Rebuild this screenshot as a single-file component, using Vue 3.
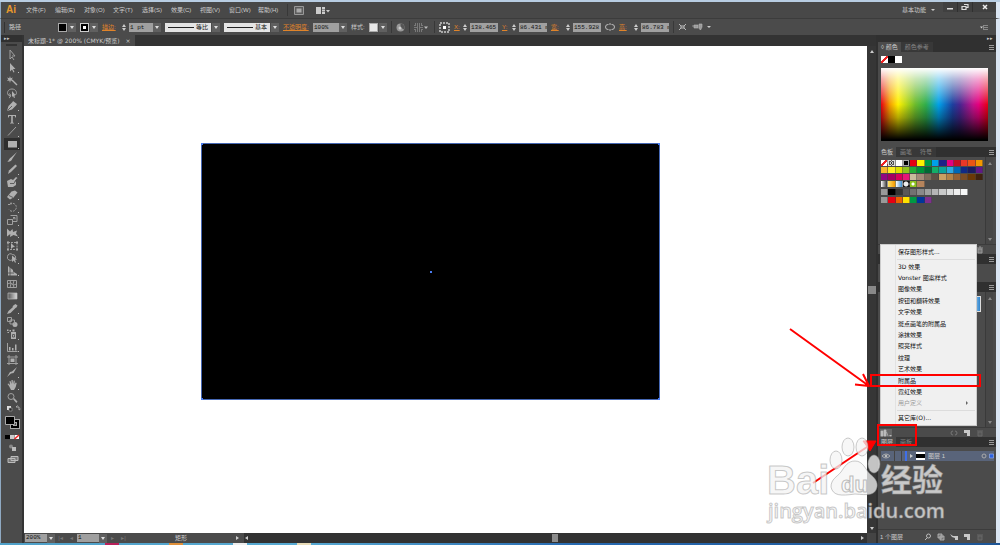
<script setup>
const menus = ['文件(F)', '编辑(E)', '对象(O)', '文字(T)', '选择(S)', '效果(C)', '视图(V)', '窗口(W)', '帮助(H)']

const tools = [
  { name: '选择工具', s: 'M4 1v9l2-2 2 3M4 1l5 6H6' },
  { name: '直接选择工具', f: 'M4 1l5.500 6H7l1.500 3-1 .6L6 7.500 4 9.500z', more: true },
  { name: '魔棒工具', f: 'M5.500 5.500l1-1 5 5-1 1z M4 1l.7 2.300L7 2.500 5.700 4.300 7 6 4.700 5.500 4 8 3.300 5.500 1 6l1.300-1.800L1 2.500l2.300.8z' },
  { name: '套索工具', s: 'M4 9C0 8 1 2 6 2s6 6 2 6.500M4 9c-2-1-1-3 0-2s1 3-1 4', f: 'M6 4l3.500 4H8l1 2.500-1 .5-1-2-1 1z' },
  { name: '钢笔工具', f: 'M7 1l4 3-1 1.500-4 4L1 11l1.500-5L6.500 2z', cut: 'M1.500 10.500L6 6', more: true },
  { name: '文字工具', f: 'M2 2h8v2.500H9.300L8.800 3H6.800v6.500l1.200.5v.5H4V10l1.200-.5V3h-2l-.5 1.500H2z', more: true },
  { name: '直线段工具', s: 'M2 10.500L10 2', more: true },
  { name: '矩形工具', f: 'M2 3h9v6.500H2z', more: true, on: true },
  { name: '画笔工具', f: 'M11 1L6.500 7.500C5.500 10.500 3 11 1 10.500c2-.5 1.500-2.500 4-4z' },
  { name: '铅笔工具', f: 'M9.500 1.500l1.500 1.500-6 6L2 11l1-3.500z', more: true },
  { name: '斑点画笔工具', f: 'M1 5l4-2 2 1 3-3 1.500 1L8 6l2-1v4l-3 2H2z', cut: 'M4 7.500h4l3-5' },
  { name: '橡皮擦工具', f: 'M5.500 2.500L9 1.500l2.500 2-4 5L4 10.500 1 8z', cut: 'M3 6.500l4 2', more: true },
  { name: '旋转工具', s: 'M4 3a4 4 0 1 1-1 5.500M2 3.500h3v-2', dash: true, more: true },
  { name: '比例缩放工具', s: 'M1.500 5.500h5v5h-5zM4.500 1.500h6.500v6H7M6.500 5.500L9 3.500M7 3.500h2v2', more: true },
  { name: '宽度工具', f: 'M1 1.500l3 3 2.500-2.500L7 5l4-1.500-1 3 2 3-4.500-1.500L4 10l.3-3L1 9.500z', more: true },
  { name: '自由变换工具', s: 'M2 2.500h9v7H2z', f: 'M1 1.500h2v2H1zM10 1.500h2v2h-2zM1 8.500h2v2H1zM10 8.500h2v2h-2zM5 3l4 4-2 .2L5 9z', dash: true },
  { name: '形状生成器工具', s: 'M1.500 4.500a3 3 0 0 1 5-2 3 3 0 0 1 3 4M1.500 4.500a3 3 0 0 0 5 3', f: 'M6 3.500l5 4-2 .3 1 2.500-1 .5-1.200-2.300L6 10z', more: true },
  { name: '透视网格工具', f: 'M2 1l5 4v1.500l4 2.500v1.500H2z', cut: 'M4 2v9M2 8h6', more: true },
  { name: '网格工具', s: 'M1.500 2.500h9v7h-9zM1.500 6q3-2 4.500 0t4.500 0M4 2.500q2 3 0 7M8 2.500q-2 4 0 7' },
  { name: '渐变工具', grad: true },
  { name: '吸管工具', f: 'M8 2l1.500-1 2 1.500-1 2-1 .5-5 5L1 11l1.500-3 4.500-4-.5-.8z', more: true },
  { name: '混合工具', s: 'M1.500 1.500h4v4h-4zM4 4h4.500v4H4z', f: 'M9 6a2.500 2.500 0 1 1 0 5 2.500 2.500 0 0 1 0-5z' },
  { name: '符号喷枪工具', f: 'M5 4h5v7H5zM6.500 1.500h2V3.500h-2zM1 1.500h1.500V3H1zM3.500 2H5v1.500H3.500zM1.500 4H3v1H1.500z', cut: 'M6.500 6.500h2v2.500h-2z', more: true },
  { name: '柱形图工具', s: 'M1.500 2v8.500H11.500', f: 'M3 6h1.500v3.500H3zM6 7h1.500v2.500H6zM9 3.500h1.500v6H9z', more: true },
  { name: '画板工具', s: 'M3 1v10M10 1v10M1 3h11M1 9.500h11', f: 'M4.500 4.500h4v3.500h-4z' },
  { name: '切片工具', f: 'M11 1l-3.500 6L5 7.500 1 11l3-5 2-.5z', more: true },
  { name: '抓手工具', f: 'M3 7L1.500 5l1-.5L4 6 3.500 2h1L5.500 5V1h1.200l.3 4 .8-3.500 1 .2L8.500 5.500l1.200-2 1 .5-1 4L8 11H5z', more: true },
  { name: '缩放工具', s: 'M5 1.500a3 3 0 1 1 0 6 3 3 0 0 1 0-6', f: 'M7 7l1-1 3.500 3.500-1.200 1.500z' },
]

const swatches = [
  'none', 'reg', '#fff', 'key', '#e60012', '#fff100', '#009944', '#00a0e9', '#1d2088', '#e4007f', '#c30d23', '#e83828', '#ea5514', '#f39800',
  '#f8b62d', '#fcee21', '#dbe000', '#8fc31f', '#22ac38', '#009139', '#006934', '#13ae67', '#0ba29a', '#2ea7e0', '#0068b7', '#102a85', '#1b1c60', '#601986',
  '#920783', '#a40061', '#d7005a', '#e61678', '#c9bc9c', '#a38b78', '#7d6b5a', '#5d5044', '#c9a063', '#b28247', '#956134', '#7b4d24', '#6a3906', '#40220f',
  'g-silver', 'g-gold', 'g-sky', 'dot', 'leaf', 'cloth',
]
const grays = ['#000', '#333', '#595757', '#727171', '#898989', '#9fa0a0', '#b5b5b6', '#c9caca', '#dcdddd', '#efefef', '#f7f8f8']
const brights = ['#e60012', '#eb6100', '#ffe100', '#009944', '#00369b', '#7f2f8e']

const effects = ['3D 效果', 'Vonster 图案样式', '图像效果', '按钮和翻转效果', '文字效果', '斑点画笔的附属品', '涂抹效果', '照亮样式', '纹理', '艺术效果', '附属品', '霓虹效果', '用户定义']
</script>

<template>
  <div class="app">
    <header class="menubar">
      <strong class="brand">Ai</strong>
      <nav class="menus">
        <button v-for="m in menus" :key="m">{{ m }}</button>
      </nav>
      <i class="sep"></i>
      <button class="bridge" aria-label="Bridge"><svg width="10" height="9" viewBox="0 0 10 9"><path d="M.5.500h9v8h-9z" fill="#5c5c5c" stroke="#999" /><path d="M2.500 2.500h5v4h-5z" fill="#aaa" /></svg></button>
      <button aria-label="排列文档"><svg width="14" height="9" viewBox="0 0 14 9"><path d="M0 1h5v7H0zM6 1h3v2H6zM6 3.500h3v2H6zM6 6h3v2H6zM10 4h4l-2 2.500z" fill="#ccc" /></svg></button>
      <button class="workspace">基本功能 <i class="caret"></i></button>
      <div class="winbtns">
        <button aria-label="最小化"><svg width="10" height="8" viewBox="0 0 10 8"><path d="M2 5h6v1.500H2z" fill="#ddd" /></svg></button>
        <button aria-label="还原"><svg width="10" height="8" viewBox="0 0 10 8"><path d="M4 1.500h4v3H6M2 3.500h4v3H2z" fill="none" stroke="#ddd" stroke-width="1.200" /></svg></button>
        <button class="close" aria-label="关闭"><svg width="10" height="8" viewBox="0 0 10 8"><path d="M3 2l4 4M7 2L3 6" stroke="#eee" stroke-width="1.500" /></svg></button>
      </div>
    </header>

    <div class="control">
      <i class="grip"></i>
      <span class="kind">路径</span>
      <div class="combo"><button class="chip black" aria-label="填色"></button><button class="dd" aria-label="填色选项"></button></div>
      <div class="combo"><button class="chip ring" aria-label="描边颜色"></button><button class="dd" aria-label="描边选项"></button></div>
      <label class="hot w15" for="stroke">描边:</label>
      <div class="field"><i class="step"></i><input id="stroke" class="w24" value="1 pt"><button class="dd" aria-label="粗细"></button></div>
      <div class="profile"><div class="pick"><select aria-label="变量宽度配置文件"><option>等比</option></select></div><button class="dd" aria-label="配置"></button></div>
      <div class="profile"><div class="pick"><select aria-label="画笔定义"><option>基本</option></select></div><button class="dd" aria-label="画笔"></button></div>
      <label class="hot w26" for="opacity">不透明度:</label>
      <div class="field"><input id="opacity" class="w26" value="100%"><button class="dd" aria-label="不透明度选项"></button></div>
      <span class="w14">样式:</span>
      <div class="combo"><button class="chip white" aria-label="图形样式"></button><button class="dd" aria-label="样式选项"></button></div>
      <i class="sep"></i>
      <svg width="9" height="9" viewBox="0 0 9 9"><circle cx="4.500" cy="4.500" r="4" fill="#999" /><path d="M4.500 4.500V.5a4 4 0 0 1 3.500 6z" fill="#555" /><circle cx="4" cy="5" r="1.500" fill="#ccc" /></svg>
      <i class="sep"></i>
      <svg width="16" height="9" viewBox="0 0 16 9"><path d="M1 1h7v7H1zM3 3h3v3H3z" fill="none" stroke="#aaa" stroke-dasharray="1 1" /><path d="M10 3.500h4l-2 2.500z" fill="#bbb" /></svg>
      <i class="sep"></i>
      <svg width="11" height="11" viewBox="0 0 11 11"><path d="M1 1h9v9H1z" fill="none" stroke="#aaa" stroke-width="2" stroke-dasharray="2 1" /><path d="M4 4h3v3H4z" fill="#fff" /></svg>
      <label class="hot w4" for="x">X:</label>
      <div class="field"><i class="step"></i><input id="x" class="w28" value="138.465 mm"></div>
      <label class="hot w5" for="y">Y:</label>
      <div class="field"><i class="step"></i><input id="y" class="w28" value="86.431 mm"></div>
      <label class="hot w10" for="w">宽:</label>
      <div class="field"><i class="step"></i><input id="w" class="w28" value="155.928 mm"></div>
      <svg width="10" height="8" viewBox="0 0 10 8"><path d="M3.500 1.500H3a2.500 2.500 0 0 0 0 5h.5M6.500 1.500H7a2.500 2.500 0 0 1 0 5h-.5M5 0v2M5 6v2" fill="none" stroke="#bbb" /></svg>
      <label class="hot w10" for="h">高:</label>
      <div class="field"><i class="step"></i><input id="h" class="w28" value="86.783 mm"></div>
      <i class="sep"></i>
      <svg width="9" height="8" viewBox="0 0 9 8"><path d="M1 1l2 2M8 1L6 3M1 7l2-2M8 7L6 5M3 3h3v2H3z" fill="none" stroke="#bbb" /></svg>
      <svg width="12" height="8" viewBox="0 0 12 8"><path d="M3 2h4v3H3zM8 1h3v3L9.500 7 8 5.500zM3 3H1" fill="#999" stroke="#bbb" stroke-width=".6" /></svg>
      <i class="caret"></i>
      <button class="flyout" aria-label="控制面板菜单"><svg width="8" height="7" viewBox="0 0 8 7"><path d="M0 2.500h3L1.500 4.500z" fill="#ccc" /><path d="M4 1.500h4M4 3.500h4M4 5.500h4M3.500 1v5" stroke="#999" stroke-width=".8" /></svg></button>
    </div>

    <div class="work">
      <aside class="toolbox">
        <div class="tophead">▸▸</div>
        <div class="dots"></div>
        <div class="tools">
          <button v-for="t in tools" :key="t.name" :class="{ on: t.on, more: t.more }" :aria-label="t.name">
            <svg width="12" height="12" viewBox="0 0 12 12">
              <defs v-if="t.grad"><linearGradient id="toolGrad"><stop stop-color="#555" /><stop offset="1" stop-color="#ddd" /></linearGradient></defs>
              <path v-if="t.grad" d="M2 3h9v6H2z" fill="url(#toolGrad)" stroke="#bbb" stroke-width=".7" />
              <path v-if="t.f" :d="t.f" fill="#b0b0b0" />
              <path v-if="t.s" :d="t.s" fill="none" stroke="#a0a0a0" :stroke-dasharray="t.dash ? '2 1' : null" />
              <path v-if="t.cut" :d="t.cut" fill="none" stroke="#4a4a4a" stroke-width=".8" />
            </svg>
          </button>
        </div>
        <svg class="paint" width="18" height="60" viewBox="0 0 18 60">
          <path d="M3 2h4v4H3z" fill="#ddd" /><path d="M5 4h3v3H5z" fill="#222" stroke="#aaa" stroke-width=".6" />
          <path d="M12 3h3v3M12 3l1.500-1.500M15 6l1.500-1" fill="none" stroke="#aaa" />
          <path d="M8 17h6v6H8z" fill="none" stroke="#aaa" stroke-width="4" /><path d="M8 17h6v6H8z" fill="none" stroke="#000" stroke-width="2" />
          <path d="M1.500 12.500h9v8h-9z" fill="#000" stroke="#aaa" />
          <path d="M1 31h5v4H1z" /><path d="M6 31h4v4H6z" fill="#ccc" /><path d="M10.500 31H15v4h-4.500z" fill="#fff" /><path d="M10.500 35L15 31" stroke="#e22" stroke-width="1.500" />
          <circle cx="7" cy="42.500" r="2" fill="#888" /><path d="M8 43h4v4H8z" fill="#bbb" />
          <path d="M7 52.500h7v4H7zM4 54.500h7v4H4z" fill="#777" stroke="#bbb" />
        </svg>
      </aside>

      <main class="document">
        <div class="tabs"><div class="tab">未标题-1* @ 200% (CMYK/预览)<button aria-label="关闭文档">×</button></div></div>
        <div class="view">
          <section class="canvas"><div class="art"><i></i><i></i><i></i><i></i><b></b></div></section>
          <div class="vbar"><i class="tri up"></i><i class="thumb"></i><i class="tri down"></i></div>
        </div>
        <footer class="status">
          <input class="zoom" aria-label="缩放" value="200%"><button class="dd" aria-label="缩放级别"></button>
          <span class="nav">|◂</span><span class="nav">◂</span>
          <input class="zoom" aria-label="画板" value="1"><button class="dd" aria-label="画板导航"></button>
          <span class="nav">▸</span><span class="nav">▸|</span>
          <span class="mode">矩形</span>
          <i class="tri right"></i>
          <div class="hbar"><i class="tri left"></i><i class="thumb"></i><i class="tri right"></i></div>
          <i class="corner"></i>
        </footer>
      </main>

      <aside class="dock">
        <div class="tophead end">▸▸</div>
        <section class="panel color">
          <div class="phead"><button class="ptab on">◊ 颜色</button><button class="ptab">颜色参考</button><i class="pmenu"></i></div>
          <div class="pbody">
            <div class="tiny"><i class="none"></i><i class="k"></i><i class="w"></i></div>
            <div class="spectrum"></div>
          </div>
        </section>
        <section class="panel swatch">
          <div class="phead"><button class="ptab on">色板</button><button class="ptab">画笔</button><button class="ptab">符号</button><i class="pmenu"></i></div>
          <div class="pbody row">
            <div class="swatchlist">
              <div class="grid"><i v-for="(c, n) in swatches" :key="n" :class="c[0] === '#' ? '' : c" :style="{ backgroundColor: c[0] === '#' ? c : null }"></i></div>
              <div class="grid group"><i class="folder"></i><i v-for="c in grays" :key="c" :style="{ backgroundColor: c }"></i></div>
              <div class="grid group"><i class="folder"></i><i v-for="c in brights" :key="c" :style="{ backgroundColor: c }"></i></div>
            </div>
            <div class="pscroll"><i class="tri up"></i><i class="tri down"></i></div>
          </div>
          <div class="pfoot"><svg width="8" height="8" viewBox="0 0 8 8"><path d="M1 2h6M3 1h2M2 3h4v4H2z" fill="#777" stroke="#999" /></svg></div>
        </section>
        <section class="panel strokep">
          <div class="phead"><i class="pmenu"></i></div>
          <div class="pbody"></div>
        </section>
        <section class="panel styles">
          <div class="phead"><i class="pmenu"></i></div>
          <div class="pbody row">
            <div class="stylelist"><i class="sky"></i></div>
            <div class="pscroll"><i class="tri up"></i><i class="tri down"></i></div>
          </div>
          <div class="pfoot">
            <button class="lib" aria-label="图形样式库菜单"><svg width="12" height="8" viewBox="0 0 12 8"><path d="M1 2h2v5H1zM4 1h2v6H4zM6.500 3L8 7" fill="#bbb" stroke="#bbb" stroke-width=".7" /><path d="M9 6h3l-1.500 1.500z" fill="#bbb" /></svg></button>
            <svg class="push" width="8" height="8" viewBox="0 0 8 8"><path d="M3 2a2 2 0 0 0 0 4M5 2a2 2 0 0 1 0 4" fill="none" stroke="#777" /></svg>
            <svg width="8" height="8" viewBox="0 0 8 8"><path d="M1 1h6v6H4V4H1z" fill="#c8c8c8" /></svg>
            <svg width="8" height="8" viewBox="0 0 8 8"><path d="M1 2h6M2 3h4v4H2z" fill="#555" stroke="#686868" /></svg>
          </div>
        </section>
        <section class="panel layers">
          <div class="phead"><button class="ptab on">图层</button><button class="ptab">画板</button><i class="pmenu"></i></div>
          <div class="pbody">
            <div class="layer">
              <svg width="10" height="8" viewBox="0 0 10 8"><path d="M1 4q4-4 8 0-4 4-8 0z" fill="none" stroke="#aaa" /><circle cx="5" cy="4" r="1.300" fill="#bbb" /></svg>
              <i class="cell"></i><i class="bar"></i><i class="tri right"></i><i class="pic"></i><span>图层 1</span>
              <svg class="target" width="13" height="8" viewBox="0 0 13 8"><circle cx="3" cy="4" r="2" fill="none" stroke="#aaa" /><path d="M8.500 2h4v4h-4z" fill="#2d62e0" stroke="#9bb4ee" stroke-width=".6" /></svg>
            </div>
          </div>
          <div class="pfoot">
            <span>1 个图层</span>
            <svg class="push" width="8" height="8" viewBox="0 0 8 8"><circle cx="4.500" cy="3" r="2" fill="none" stroke="#bbb" /><path d="M3 5L1 7" stroke="#bbb" /></svg>
            <svg width="8" height="8" viewBox="0 0 8 8"><path d="M1 1h4v4H1zM3 3h4v4H3z" fill="#777" stroke="#bbb" stroke-width=".8" /></svg>
            <svg width="8" height="8" viewBox="0 0 8 8"><path d="M0 1l3 2h5v4H5V5L2 4z" fill="#c8c8c8" /></svg>
            <svg width="8" height="8" viewBox="0 0 8 8"><path d="M1 1h6v6H4V4H1z" fill="#c8c8c8" /></svg>
            <svg width="8" height="8" viewBox="0 0 8 8"><path d="M1 2h6M2 3h4v4H2z" fill="#555" stroke="#686868" /></svg>
          </div>
        </section>
      </aside>
    </div>
    <div class="taskbar"><i></i><i></i><i></i><i></i></div>

    <div class="popup" role="menu">
      <button role="menuitem" class="edge">保存图形样式...</button>
      <hr>
      <div class="effects">
        <button v-for="e in effects" :key="e" role="menuitem" :class="{ hover: e === '附属品', off: e === '用户定义' }">{{ e }}</button>
      </div>
      <hr>
      <button role="menuitem" class="edge">其它库(O)...</button>
    </div>

    <svg class="overlay" width="240" height="225" viewBox="760 320 240 225">
      <g fill="none" stroke="#f00" stroke-width="2">
        <path d="M871 375h109v11H871zM878 425h38v20h-38z" />
        <path d="M790 329L869 386M855 384.500l14 1.500-6-12" stroke-linejoin="round" />
        <path d="M813 483L870 445" />
        <path d="M863 441h13l-6 10z" fill="#f00" stroke-width="1" />
      </g>
      <g class="mark">
        <text x="767" y="494" font-size="40" font-weight="700">Bai</text>
        <ellipse cx="836" cy="460" rx="6" ry="9" />
        <ellipse cx="848" cy="447" rx="6" ry="9" />
        <ellipse cx="862" cy="447" rx="6" ry="9" />
        <ellipse cx="874" cy="464" rx="6" ry="9" />
        <path d="M855 461c8 0 10 8 15 13 5 4 8 8 7 13-2 9-9 8-22 7-14 2-22 2-24-7 0-8 6-10 10-15 4-6 7-11 14-11z" />
        <text class="du" x="841" y="492" font-size="22" font-weight="700">du</text>
        <text x="881" y="491" font-size="31" font-weight="700">经验</text>
        <text class="site" x="768" y="518" font-size="20">jingyan.baidu.com</text>
      </g>
    </svg>
  </div>
</template>

<style>
body { margin: 0; overflow: hidden; background: #444; }
</style>

<style scoped>
.app { position: relative; height: 100vh; box-sizing: border-box; display: flex; flex-direction: column; border-top: 2px solid #b8cde2; font: 6px/8px "Liberation Sans", "Noto Sans CJK SC", sans-serif; color: #ccc; background: #333; }
button, input, select { font: inherit; color: inherit; margin: 0; padding: 0; border: 0; background: none; border-radius: 0; }
button, label, span { white-space: nowrap; }
svg { display: block; flex: none; }
i { display: block; flex: none; }
.menubar, .control, .work { border-left: 1px solid #8fa9c2; border-right: 4px solid #dbe6f3; }

.menubar { height: 16px; flex: none; display: flex; align-items: center; background: #484848; padding-left: 5px; }
.brand { width: 20px; color: #e8992c; font-size: 10px; }
.menus { display: flex; gap: 9px; }
.menus button { width: 20px; text-align: left; }
.menubar > .sep { margin: 0 6px 0 9px; }
.sep { width: 1px; height: 12px; background: #383838; }
.bridge { margin-right: 12px; }
.workspace { margin-left: auto; margin-right: 8px; display: flex; align-items: center; gap: 5px; }
.caret { width: 0; border: 2px solid transparent; border-top: 2px solid #ccc; border-bottom: 0; }
.winbtns { display: flex; align-self: flex-start; background: #303030; gap: 1px; height: 10px; }
.winbtns button { width: 14px; background: #404040; display: grid; place-items: center; }
.winbtns .close { width: 23px; }

.control { height: 17px; flex: none; display: flex; align-items: center; gap: 4px; background: #4b4b4b; border-top: 1px solid #3c3c3c; padding-left: 3px; box-sizing: border-box; }
.grip { width: 1px; height: 11px; background: #333; }
.kind { width: 45px; }
.combo { display: flex; gap: 1px; }
.chip { width: 9px; height: 9px; border: 1px solid #aaa; }
.black { background: #000; }
.white { background: #e8e8e8; }
.ring { background: #fff; border: 1px solid #ccc; box-shadow: inset 0 0 0 2px #000; }
.dd { width: 8px; height: 9px; background: #606060; display: grid; place-items: center; flex: none; }
.dd::after { content: ""; border: 2px solid transparent; border-top: 3px solid #ddd; border-bottom: 0; }
.hot { color: #e0842a; text-decoration: underline; }
.control label, .control > span { flex: none; }
.w4 { width: 4px; }
.w5 { width: 5px; }
.w10 { width: 10px; }
.w14 { width: 14px; }
.w15 { width: 15px; }
.w24 { width: 24px; }
.w26 { width: 26px; }
.w28 { width: 28px; }
.field { display: flex; align-items: center; flex: none; }
.field input, .zoom { height: 9px; box-sizing: border-box; background: #a0a0a0; color: #111; font-family: "Liberation Mono", monospace; padding-left: 1px; }
.step { width: 8px; height: 9px; position: relative; }
.step::before, .step::after { content: ""; position: absolute; left: 1px; border: 2px solid transparent; }
.step::before { top: 1px; border-top: 0; border-bottom: 3px solid #ccc; }
.step::after { bottom: 1px; border-bottom: 0; border-top: 3px solid #ccc; }
.profile { display: flex; gap: 1px; flex: none; }
.pick { position: relative; width: 46px; height: 9px; background: #e4e4e4; }
.pick::before { content: ""; position: absolute; left: 3px; top: 4px; width: 26px; height: 1px; background: #222; }
.pick select { appearance: none; width: 46px; height: 9px; padding-left: 31px; color: #111; display: block; }
.flyout { margin-left: auto; margin-right: 8px; }

.work { flex: 1; min-height: 0; display: flex; background: #333; }
.tophead { height: 7px; line-height: 7px; font-size: 5px; background: #303030; padding: 0 3px; flex: none; }
.tophead.end { text-align: right; }
.toolbox { width: 21px; flex: none; background: #4b4b4b; }
.dots { margin: 2px 5px 3px; height: 2px; background: #333; }
.tools { height: 355px; display: grid; grid-auto-rows: 1fr; margin: 1px 0 0; }
.tools button { position: relative; margin: 0 2px 0 3px; display: grid; place-items: center; }
.tools .on { background: #2e2e2e; }
.tools .more::after { content: ""; position: absolute; right: 1px; bottom: 1px; width: 1px; height: 1px; background: #bbb; }
.paint { margin-left: 3px; }

.document { flex: 1; min-width: 0; display: flex; flex-direction: column; margin-left: 2px; }
.tabs { height: 11px; flex: none; background: #333; }
.tab { display: inline-flex; align-items: center; gap: 6px; height: 11px; padding: 0 4px; background: #4b4b4b; font-family: "DejaVu Sans", "Noto Sans CJK SC", sans-serif; }
.view { flex: 1; min-height: 0; display: flex; }
.canvas { flex: 1; display: grid; background: #fff; padding: 97px 207px 133px 177px; }
.art { position: relative; background: #000; border: 1px solid #4668b4; }
.art i, .art b { position: absolute; width: 2px; height: 2px; background: #4a7cf0; }
.art i:nth-child(1) { left: -1px; top: -1px; }
.art i:nth-child(2) { right: -1px; top: -1px; }
.art i:nth-child(3) { left: -1px; bottom: -1px; }
.art i:nth-child(4) { right: -1px; bottom: -1px; }
.art b { left: 50%; top: 50%; margin: -1px; }
.vbar { width: 9px; flex: none; display: flex; flex-direction: column; align-items: center; justify-content: space-between; padding: 4px 0 3px; background: #363636; }
.vbar .thumb { width: 8px; height: 8px; background: #888; }
.tri { width: 0; height: 0; border: 2px solid transparent; }
.up { border-top: 0; border-bottom: 3px solid #ccc; }
.down { border-bottom: 0; border-top: 3px solid #ccc; }
.left { border-left: 0; border-right: 3px solid #ccc; }
.right { border-right: 0; border-left: 3px solid #ccc; }
.status { height: 10px; flex: none; display: flex; align-items: center; background: #4b4b4b; padding-left: 1px; }
.zoom { width: 22px; height: 8px; }
.nav { width: 11px; text-align: center; color: #777; }
.mode { margin-left: 46px; width: 61px; }
.hbar { flex: 1; height: 10px; margin-left: 5px; background: #323232; display: flex; align-items: center; justify-content: space-between; padding: 0 3px 0 1px; }
.hbar .thumb { width: 6px; height: 8px; background: #8c8c8c; }
.corner { width: 9px; height: 10px; background: #444; }

.dock { width: 120px; flex: none; display: flex; flex-direction: column; padding-left: 2px; background: #303030; box-sizing: border-box; }
.panel { display: flex; flex-direction: column; flex: none; }
.phead { height: 10px; flex: none; display: flex; align-items: center; background: #303030; }
.ptab { height: 10px; padding: 0 4px; color: #858585; background: #383838; }
.ptab.on { color: #ccc; background: #4b4b4b; padding: 0 3px; }
.pmenu { margin-left: auto; margin-right: 2px; width: 5px; height: 5px; background: repeating-linear-gradient(#999 0 1px, transparent 1px 2px); }
.pbody { flex: 1; min-height: 0; background: #4b4b4b; padding: 0 3px; }
.pbody.row { display: flex; justify-content: space-between; }
.color { height: 105px; }
.swatch { height: 107px; }
.strokep { height: 28px; }
.styles { height: 155px; }
.layers { flex: 1; }
.tiny { display: flex; margin: 4px 0 5px; }
.tiny i { width: 7px; height: 7px; }
.none { background: linear-gradient(135deg, #fff 40%, #e22 40% 60%, #fff 60%); }
.k { background: #000; }
.w { background: #fff; }
.spectrum { height: 73px; margin-right: 5px; background: linear-gradient(#fff 0%, rgba(255,255,255,.65) 15%, transparent 50%, rgba(0,0,0,.3) 68%, #000 98%), linear-gradient(90deg, #e60012 0%, #f39800 8%, #fff100 16%, #6cbb2c 32%, #2fae4c 42%, #00a0e9 54%, #1d3f9e 67%, #4a2590 74%, #c0128a 86%, #e4007f 91%, #e60012 100%); }
.swatchlist { width: 102px; padding-top: 3px; }
.grid { display: grid; grid-template-columns: repeat(14, 1fr); grid-auto-rows: 6px; row-gap: 1px; column-gap: 0; }
.grid i { border-right: 1px solid rgba(60,60,60,.5); }
.group { margin-top: 2px; }
.key { background: #000; box-shadow: inset 0 0 0 1px #aaa; }
.reg { background: radial-gradient(#333 1px, #ccc 1px 2px, #555 2px 3px, #ddd 3px); }
.g-silver { background: linear-gradient(90deg, #fff, #333); }
.g-gold { background: linear-gradient(90deg, #ffe66b, #f39800); }
.g-sky { background: linear-gradient(90deg, #fff, #3f8fd0); }
.dot { background: radial-gradient(#eee 2px, #111 3px); }
.leaf { background: radial-gradient(#fff 1px, #8fc31f 2px); }
.cloth { background: #b6845c; }
.folder { background: #999; }
.pscroll { width: 7px; display: flex; flex-direction: column; align-items: center; justify-content: space-between; padding: 5px 0 3px; background: #474747; border-left: 1px solid #3a3a3a; }
.pscroll .tri { opacity: .5; }
.pfoot { height: 10px; flex: none; display: flex; align-items: center; gap: 5px; background: #4b4b4b; border-top: 1px solid #3c3c3c; padding: 0 12px 0 2px; box-sizing: border-box; }
.layers .pfoot { height: 14px; }
.swatch .pfoot { justify-content: flex-end; }
.push { margin-left: auto; }
.lib { background: #666; width: 12px; height: 8px; }
.stylelist { flex: 1; display: flex; justify-content: flex-end; padding: 4px 4px 0 0; }
.sky { width: 6px; height: 14px; border: 1px solid #ddd; background: linear-gradient(90deg, #9ccaf0, #2f84cc); }
.layer { height: 10px; margin: 4px -1px 0 0; display: flex; align-items: center; background: #59647a; gap: 3px; }
.cell { width: 6px; height: 10px; border: solid #444; border-width: 0 1px; }
.bar { width: 2px; height: 10px; background: #3f6fe8; }
.pic { width: 9px; height: 4px; background: #000; border: solid #fff; border-width: 2px 0; }
.target { margin-left: auto; }

.taskbar { height: 2px; flex: none; display: flex; gap: 50px; padding-left: 105px; background: linear-gradient(90deg, #4fa0c8, #58aad2 30%, #2769b0 58%, #1d5595); }
.taskbar i { width: 14px; background: #b8205a; }
.taskbar i:nth-child(2) { background: #e0903a; }
.taskbar i:nth-child(3) { background: #eee; }
.taskbar i:nth-child(4) { background: #e8dcb8; }

.popup { position: absolute; right: 23px; bottom: 119px; width: 97px; box-sizing: border-box; padding: 1px; background: linear-gradient(90deg, #f0f0f0 14px, #e2e2e2 14px 15px, #f0f0f0 15px); color: #111; border: 1px solid #ccc; font-family: "DejaVu Sans", "Noto Sans CJK SC", sans-serif; }
.popup button { width: 100%; padding-left: 16px; text-align: left; display: block; }
.popup .edge { height: 12px; }
.popup hr { margin: 1px 0 1px 15px; border: 0; height: 1px; background: #dcdcdc; }
.effects { display: grid; height: 148px; grid-auto-rows: 1fr; }
.popup .hover { background: #e4ecf7; }
.popup .off { color: #999; position: relative; }
.popup .off::after { content: ""; position: absolute; right: 5px; top: 3px; border: 2px solid transparent; border-left-color: #666; }

.overlay { position: absolute; right: 0; bottom: 0; pointer-events: none; }
.mark { fill: rgba(244,244,244,.75); stroke: rgba(150,150,150,.5); stroke-width: 1; font-family: "Liberation Sans", "Noto Sans CJK SC", sans-serif; }
.du { fill: rgba(250,250,250,.8); stroke: #bbb; }
.site { font-family: "Open Sans", "Noto Sans", sans-serif; font-weight: 600; }
</style>
